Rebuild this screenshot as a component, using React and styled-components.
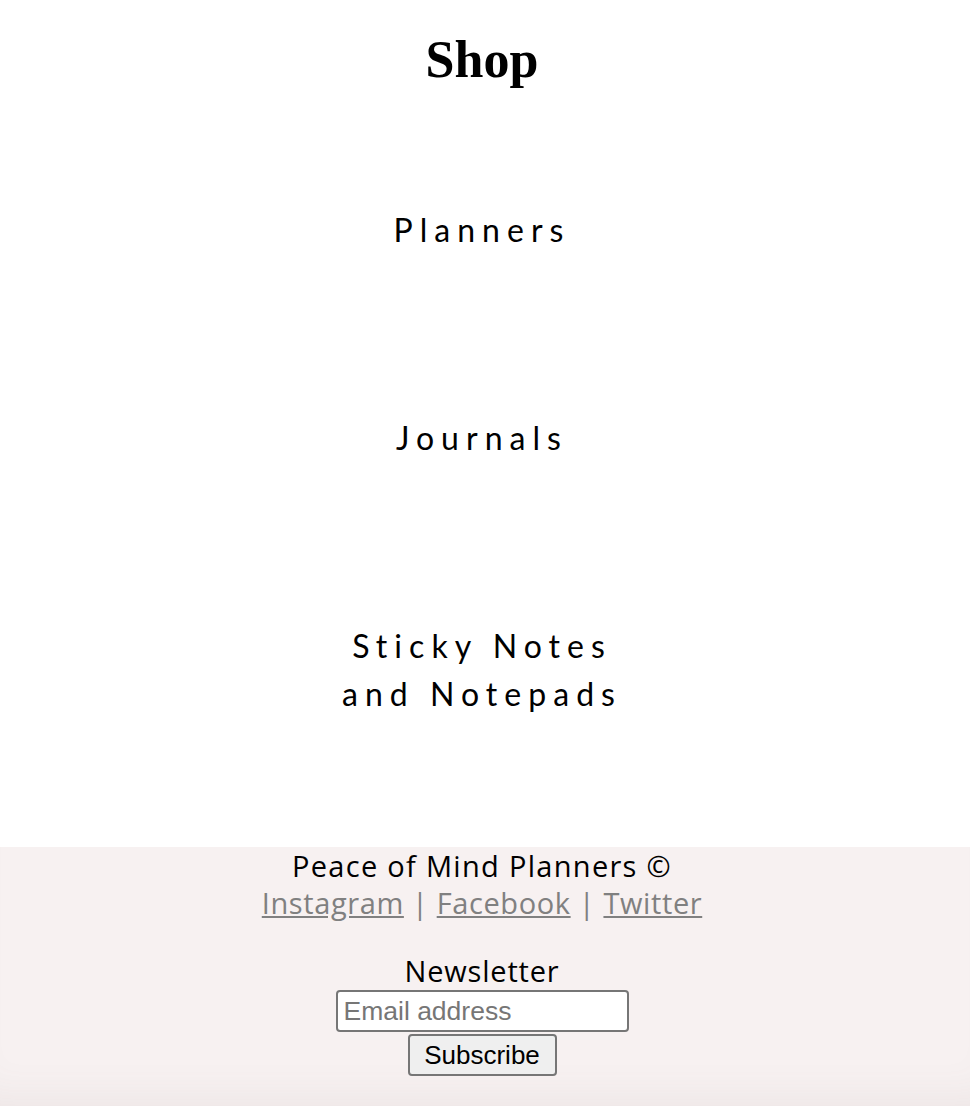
import React from 'react';
import styled, { createGlobalStyle } from 'styled-components';

const GlobalStyle = createGlobalStyle`
  html, body {
    margin: 0;
    padding: 0;
    background: #ffffff;
  }

  body {
    font-family: Lato, "Open Sans", sans-serif;
    color: #000000;
  }
`;

const Page = styled.div`
  display: flex;
  flex-direction: column;
  min-height: 1106px;
`;

const Title = styled.h1`
  margin: 0;
  padding: 30px 6px 0 0;
  height: 126px;
  box-sizing: border-box;
  text-align: center;
  font-family: "Liberation Serif", "DejaVu Serif", serif;
  font-weight: 700;
  font-size: 52px;
  line-height: 60px;
`;

const Categories = styled.ul`
  list-style: none;
  margin: 0 0 49px;
  padding: 0 6px 0 0;
  display: flex;
  flex-direction: column;
  align-items: center;
`;

const Category = styled.li`
  padding: 80px 0;
  text-align: center;
  font-family: Lato, "Open Sans", sans-serif;
  font-weight: 400;
  font-size: 32px;
  line-height: 48px;
  letter-spacing: 0.22em;
`;

const Footer = styled.footer`
  flex: 1;
  padding-right: 6px;
  background: #f7f1f1;
  box-shadow: inset 0 -40px 40px -30px rgba(120, 100, 100, 0.07);
  text-align: center;
  font-family: "Open Sans", Lato, sans-serif;
  font-size: 29px;
  line-height: 37px;
`;

const Line = styled.div`
  color: ${p => (p.muted ? '#808080' : '#000000')};
  letter-spacing: ${p => (p.muted ? '0.6px' : '1.3px')};
`;

const Social = styled.a`
  color: #808080;
  text-decoration: underline;
`;

const Newsletter = styled.form`
  margin-top: 33px;
  display: flex;
  flex-direction: column;
  align-items: center;
  gap: 2px;
`;

const Heading = styled.div`
  line-height: 34px;
  letter-spacing: 0.8px;
`;

const EmailInput = styled.input`
  box-sizing: border-box;
  width: 293px;
  height: 42px;
  padding: 0 6px;
  border: 2px solid #767676;
  border-radius: 4px;
  background: #ffffff;
  font-family: "Liberation Sans", Arial, sans-serif;
  font-size: 26.5px;
  color: #000000;

  &::placeholder {
    color: #767676;
  }
`;

const SubscribeButton = styled.button`
  box-sizing: border-box;
  width: 149px;
  height: 42px;
  border: 2px solid #767676;
  border-radius: 4px;
  background: #efefef;
  font-family: "Liberation Sans", Arial, sans-serif;
  font-size: 26px;
  color: #000000;
`;

const categories = [['Planners'], ['Journals'], ['Sticky Notes', 'and Notepads']];

const App = () => (
  <>
    <GlobalStyle />
    <Page>
      <Title>Shop</Title>

      <Categories>
        {categories.map(lines => (
          <Category key={lines[0]}>
            {lines.map(l => (
              <div key={l}>{l}</div>
            ))}
          </Category>
        ))}
      </Categories>

      <Footer>
        <Line>Peace of Mind Planners ©</Line>
        <Line muted>
          <Social href="#">Instagram</Social> | <Social href="#">Facebook</Social> |{' '}
          <Social href="#">Twitter</Social>
        </Line>

        <Newsletter onSubmit={e => e.preventDefault()}>
          <Heading>Newsletter</Heading>
          <EmailInput type="email" placeholder="Email address" />
          <SubscribeButton type="submit">Subscribe</SubscribeButton>
        </Newsletter>
      </Footer>
    </Page>
  </>
);

export default App;
